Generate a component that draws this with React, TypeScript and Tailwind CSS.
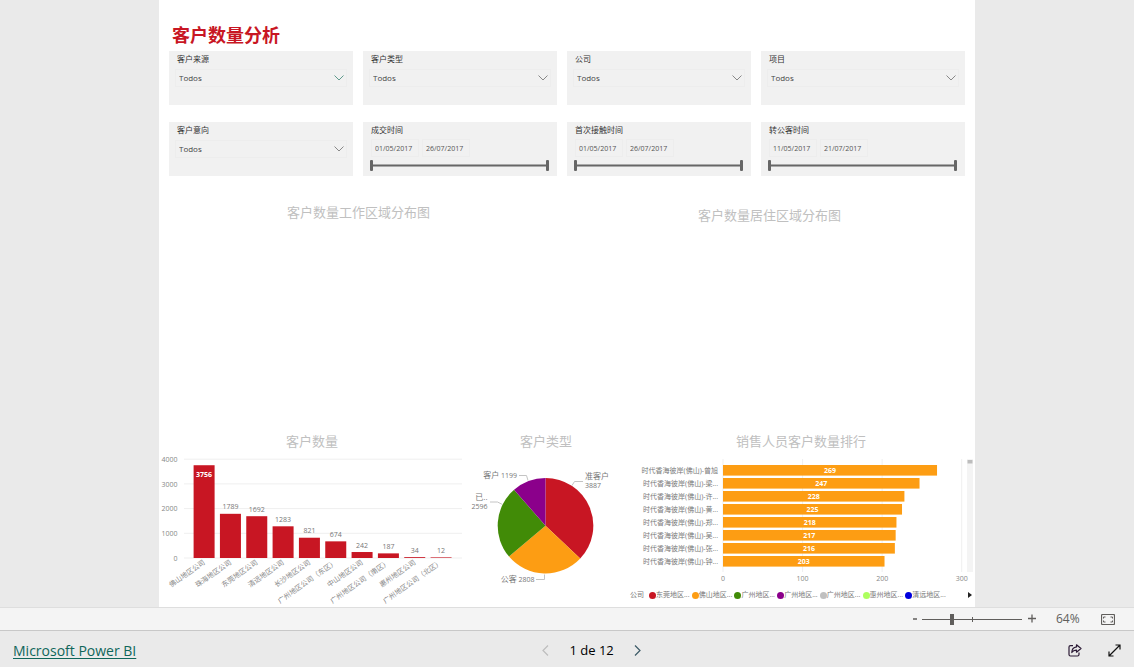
import React from "react";
import clsx from "clsx";

const slicers = [
  { id: "source", label: "客户来源", active: true },
  { id: "type", label: "客户类型" },
  { id: "company", label: "公司" },
  { id: "project", label: "项目" },
  { id: "intent", label: "客户意向" },
  { id: "deal", label: "成交时间", range: ["01/05/2017", "26/07/2017"] },
  { id: "contact", label: "首次接触时间", range: ["01/05/2017", "26/07/2017"] },
  { id: "transfer", label: "转公客时间", range: ["11/05/2017", "21/07/2017"] },
];

const regions = [
  { name: "佛山地区公司", value: 3756 },
  { name: "珠海地区公司", value: 1789 },
  { name: "东莞地区公司", value: 1692 },
  { name: "清远地区公司", value: 1283 },
  { name: "长沙地区公司", value: 821 },
  { name: "广州地区公司（东区）", value: 674 },
  { name: "中山地区公司", value: 242 },
  { name: "广州地区公司（南区）", value: 187 },
  { name: "惠州地区公司", value: 34 },
  { name: "广州地区公司（北区）", value: 12 },
];

const types = [
  { value: 3887, color: "#c81623" },
  { value: 2808, color: "#fd9d13" },
  { value: 2596, color: "#418b07" },
  { value: 1199, color: "#8b008b" },
];

const sellers = [
  { name: "时代香海彼岸(佛山)-曾旭", value: 269 },
  { name: "时代香海彼岸(佛山)-梁...", value: 247 },
  { name: "时代香海彼岸(佛山)-许...", value: 228 },
  { name: "时代香海彼岸(佛山)-黄...", value: 225 },
  { name: "时代香海彼岸(佛山)-郑...", value: 218 },
  { name: "时代香海彼岸(佛山)-吴...", value: 217 },
  { name: "时代香海彼岸(佛山)-张...", value: 216 },
  { name: "时代香海彼岸(佛山)-钟...", value: 203 },
];

const legend = [
  { name: "东莞地区...", dot: "bg-[#c81623]" },
  { name: "佛山地区...", dot: "bg-[#fd9d13]" },
  { name: "广州地区...", dot: "bg-[#418b07]" },
  { name: "广州地区...", dot: "bg-[#8b008b]" },
  { name: "广州地区...", dot: "bg-[#c0c0c0]" },
  { name: "惠州地区...", dot: "bg-[#adff5f]" },
  { name: "清远地区...", dot: "bg-[#0000dd]" },
];

const Dropdown = ({ id, active }: { id: string; active?: boolean }) => (
  <div className="relative mx-[6px] mt-[2px]">
    <select
      id={id}
      className="block h-[18px] w-full appearance-none border border-[#ededed] bg-transparent px-[3px] text-[8px] text-[#444] outline-none"
    >
      <option>Todos</option>
    </select>
    <svg
      viewBox="0 0 10 6"
      className={clsx(
        "pointer-events-none absolute right-[3px] top-[6px] h-[6px] w-[10px]",
        active ? "text-[#5f9a8c]" : "text-[#888]"
      )}
      fill="none"
      stroke="currentColor"
    >
      <path d="M.5 .5 5 5 9.500 .5" />
    </svg>
  </div>
);

const rangeClass =
  "pointer-events-none absolute inset-0 h-[11px] w-full appearance-none bg-transparent [&::-webkit-slider-thumb]:pointer-events-auto [&::-webkit-slider-thumb]:h-[11px] [&::-webkit-slider-thumb]:w-[3px] [&::-webkit-slider-thumb]:appearance-none [&::-webkit-slider-thumb]:rounded-[1px] [&::-webkit-slider-thumb]:bg-[#666]";

const DateRange = ({
  id,
  label,
  range,
}: {
  id: string;
  label: string;
  range: string[];
}) => (
  <>
    <div className="flex gap-[3px] px-[8px] pt-px">
      {range.map((date, i) => (
        <input
          key={date}
          id={i === 0 ? id : `${id}-end`}
          aria-label={i === 0 ? undefined : label}
          type="text"
          defaultValue={date}
          className="h-[18px] w-[48px] border border-[#ededed] bg-transparent px-[3px] text-[7px] text-[#555] outline-none"
        />
      ))}
    </div>
    <div className="relative ml-[7px] mr-[8px] mt-[3px] h-[11px]">
      <div className="absolute inset-x-0 top-[4px] h-[3px] border-y border-[#aaa] bg-[#666]" />
      <input
        type="range"
        aria-label={label}
        defaultValue={0}
        className={rangeClass}
      />
      <input
        type="range"
        aria-label={label}
        defaultValue={100}
        className={rangeClass}
      />
    </div>
  </>
);

const VisualTitle = ({ children }: { children: React.ReactNode }) => (
  <h2 className="text-center text-[13px] leading-[18px] text-[#c0c0c0]">
    {children}
  </h2>
);

const ColumnChart = () => {
  const base = 108;
  return (
    <svg viewBox="0 0 306 157" className="w-full text-[7px]" fill="#888">
      {[4000, 3000, 2000, 1000, 0].map((tick) => {
        const y = base - (tick / 4000) * 98.8;
        return (
          <g key={tick}>
            <line x1="25" x2="303" y1={y} y2={y} stroke="#efefef" />
            <text x="18.500" y={y + 2.6} textAnchor="end">
              {tick}
            </text>
          </g>
        );
      })}
      {regions.map((region, i) => {
        const x = 34.6 + i * 26.33;
        const height = Math.max((region.value / 4000) * 98.8, 0.6);
        const inside = i === 0;
        return (
          <g key={region.name}>
            <rect x={x} y={base - height} width="21" height={height} fill="#c81623" />
            <text
              x={x + 10.5}
              y={base - height + (inside ? 12 : -4.5)}
              textAnchor="middle"
              fill={inside ? "#fff" : "#777"}
              fontWeight={inside ? 700 : 400}
            >
              {region.value}
            </text>
            <text
              textAnchor="end"
              transform={`translate(${x + 12} 113.500) rotate(-35)`}
            >
              {region.name}
            </text>
          </g>
        );
      })}
    </svg>
  );
};

const PieChart = () => {
  const cx = 80.5;
  const cy = 75.7;
  const r = 47.8;
  const total = types.reduce((sum, t) => sum + t.value, 0);
  let angle = 0;
  const slices = types.map((t) => {
    const start = angle;
    angle += (t.value / total) * Math.PI * 2;
    const x1 = cx + r * Math.sin(start);
    const y1 = cy - r * Math.cos(start);
    const x2 = cx + r * Math.sin(angle);
    const y2 = cy - r * Math.cos(angle);
    return { ...t, d: `M${cx} ${cy}L${x1} ${y1}A${r} ${r} 0 0 1 ${x2} ${y2}Z` };
  });
  return (
    <svg viewBox="0 0 162 157" className="w-full text-[7px]" fill="#777">
      {slices.map((s) => (
        <path key={s.value} d={s.d} fill={s.color} />
      ))}
      <g fill="none" stroke="#c4c4c4">
        <path d="M107 35.500 109.500 31.500H118" />
        <path d="M54 25.500H61.500L63 30.500" />
        <path d="M25 52H32.500L37.500 54.500" />
        <path d="M71 129.500H79.500V124.500" />
      </g>
      <text x="120" y="29" className="text-[8px]">
        准客户
      </text>
      <text x="120" y="38">
        3887
      </text>
      <text x="52" y="28" textAnchor="end">
        <tspan className="text-[8px]">客户</tspan> 1199
      </text>
      <text x="22.500" y="50" textAnchor="end" className="text-[8px]">
        已..
      </text>
      <text x="22.500" y="59" textAnchor="end">
        2596
      </text>
      <text x="69.500" y="132" textAnchor="end">
        <tspan className="text-[8px]">公客</tspan> 2808
      </text>
    </svg>
  );
};

const RankingChart = () => {
  const scale = 238.7 / 300;
  return (
    <svg viewBox="0 0 348 139" className="w-full text-[7px]" fill="#888">
      {[0, 100, 200, 300].map((tick) => {
        const x = 96 + tick * scale;
        return (
          <g key={tick}>
            <line x1={x} x2={x} y1="9" y2="122" stroke="#efefef" />
            <text x={x} y="131" textAnchor="middle">
              {tick}
            </text>
          </g>
        );
      })}
      {sellers.map((seller, i) => {
        const y = 15 + i * 13;
        const width = seller.value * scale;
        return (
          <g key={seller.name}>
            <rect x="96" y={y} width={width} height="10.6" fill="#fd9d13" />
            <text x="91" y={y + 8} textAnchor="end" fill="#777">
              {seller.name}
            </text>
            <text
              x={96 + width / 2}
              y={y + 8}
              textAnchor="middle"
              fill="#fff"
              fontWeight="700"
            >
              {seller.value}
            </text>
          </g>
        );
      })}
      <rect x="340" y="9" width="6" height="113" fill="#f4f4f4" />
      <rect x="340.500" y="10" width="5" height="3.500" fill="#bdbdbd" />
    </svg>
  );
};

const Legend = () => (
  <div className="flex items-center pl-[3px] pr-[3px] text-[7px] leading-[12px] text-[#777]">
    <span className="w-[19px] shrink-0">公司</span>
    <ul className="grid w-[299px] grid-cols-7">
      {legend.map((item, i) => (
        <li key={i} className="flex items-center whitespace-nowrap">
          <span className={clsx("size-[7px] shrink-0 rounded-full", item.dot)} />
          {item.name}
        </li>
      ))}
    </ul>
    <button type="button" aria-label="Next" className="ml-auto">
      <svg viewBox="0 0 4 6" className="h-[6px] w-[4px]" fill="#222">
        <path d="M0 0 4 3 0 6Z" />
      </svg>
    </button>
  </div>
);

const ZoomBar = () => (
  <div className="flex h-[24px] shrink-0 items-center justify-end border-b border-t border-b-[#c8c8c8] border-t-[#dedede] bg-[#f4f4f4] pr-[19px] text-[12px] text-[#605e5c]">
    <button type="button" aria-label="Zoom out" className="w-[10px]">
      <svg viewBox="0 0 10 10" className="size-[10px]" stroke="currentColor" strokeWidth="1.500">
        <path d="M3 5H7" />
      </svg>
    </button>
    <div className="relative ml-[2px] h-[11px] w-[100px]">
      <div className="absolute inset-x-0 top-[5px] h-px bg-[#605e5c]" />
      <div className="absolute left-1/2 top-[3px] h-[5px] w-px bg-[#605e5c]" />
      <input
        type="range"
        aria-label="Zoom"
        defaultValue={29}
        className="absolute inset-0 h-[11px] w-full appearance-none bg-transparent [&::-webkit-slider-thumb]:h-[11px] [&::-webkit-slider-thumb]:w-[4px] [&::-webkit-slider-thumb]:appearance-none [&::-webkit-slider-thumb]:bg-[#605e5c]"
      />
    </div>
    <button type="button" aria-label="Zoom in" className="ml-[5px]">
      <svg viewBox="0 0 10 10" className="size-[10px]" stroke="currentColor" strokeWidth="1.300">
        <path d="M1 4.500H9M5 .5V8.500" />
      </svg>
    </button>
    <span className="ml-[19px] w-[45px]">64%</span>
    <button type="button" aria-label="Fit to page">
      <svg viewBox="0 0 14 11" className="h-[11px] w-[14px]" fill="none" stroke="currentColor">
        <rect x=".5" y=".5" width="13" height="10" rx="1" strokeWidth="1.200" />
        <path d="M4.500 3H2.500V4.500M9.500 3H11.500V4.500M4.500 8H2.500V6.500M9.500 8H11.500V6.500" />
      </svg>
    </button>
  </div>
);

const Footer = () => (
  <footer className="flex h-[36px] shrink-0 items-center bg-[#eaeaea] px-[13px] pt-[3px]">
    <a href="#" className="text-[14px] text-[#0f665a] underline underline-offset-2">
      Microsoft Power BI
    </a>
    <nav className="flex flex-1 items-center justify-center gap-[20px]">
      <button type="button" aria-label="Previous page" disabled>
        <svg viewBox="0 0 7 11" className="h-[11px] w-[7px]" fill="none" stroke="#bdbdbd" strokeWidth="1.200">
          <path d="M6 .5 1 5.500 6 10.500" />
        </svg>
      </button>
      <span className="text-[13px] font-medium text-black">1 de 12</span>
      <button type="button" aria-label="Next page">
        <svg viewBox="0 0 7 11" className="h-[11px] w-[7px]" fill="none" stroke="#3c5a66" strokeWidth="1.200">
          <path d="M1 .5 6 5.500 1 10.500" />
        </svg>
      </button>
    </nav>
    <div className="flex w-[74px] justify-end gap-[26px]">
      <button type="button" aria-label="Share">
        <svg viewBox="0 0 14 13" className="h-[13px] w-[14px]" fill="none" stroke="#2b1a35" strokeWidth="1.200" strokeLinejoin="round">
          <path d="M5 1.600H2.500Q1 1.600 1 3.100V10.500Q1 12 2.500 12H9.500Q11 12 11 10.500V8.500" />
          <path d="M8.500 .8 13 4.500 8.500 8.200V6.200Q5.500 6 3.800 8.500 4 3.500 8.500 2.900Z" />
        </svg>
      </button>
      <button type="button" aria-label="Full screen">
        <svg viewBox="0 0 13 13" className="size-[13px]" fill="none" stroke="#111" strokeWidth="1.200">
          <path d="M1 12 12 1M7.500 1H12V5.500M1 7.500V12H5.500" />
        </svg>
      </button>
    </div>
  </footer>
);

export default function App() {
  return (
    <div className="flex min-h-screen flex-col bg-[#eaeaea] font-['Open_Sans','Noto_Sans_CJK_SC',sans-serif]">
      <main className="mx-auto w-full max-w-[816px] flex-1 bg-white">
        <h1 className="px-[13px] pb-[2px] pt-[21px] text-[18px] font-bold leading-[28px] text-[#c81623]">
          客户数量分析
        </h1>
        <section className="grid grid-cols-[184fr_194fr_184fr_204fr] gap-x-[10px] gap-y-[17px] px-[10px]">
          {slicers.map((s) => (
            <div key={s.id} className="h-[54px] bg-[#f1f1f1]">
              <label
                htmlFor={s.id}
                className="block px-[8px] text-[8px] leading-[16px] text-[#333]"
              >
                {s.label}
              </label>
              {s.range ? (
                <DateRange id={s.id} label={s.label} range={s.range} />
              ) : (
                <Dropdown id={s.id} active={s.active} />
              )}
            </div>
          ))}
        </section>
        <section className="grid h-[228px] grid-cols-[399fr_411fr] gap-[6px] pt-[27px]">
          <VisualTitle>客户数量工作区域分布图</VisualTitle>
          <div className="pt-[3px]">
            <VisualTitle>客户数量居住区域分布图</VisualTitle>
          </div>
        </section>
        <section className="grid grid-cols-[306fr_162fr_348fr] pt-[28px]">
          <div>
            <VisualTitle>客户数量</VisualTitle>
            <ColumnChart />
          </div>
          <div>
            <VisualTitle>客户类型</VisualTitle>
            <PieChart />
          </div>
          <div>
            <VisualTitle>销售人员客户数量排行</VisualTitle>
            <RankingChart />
            <Legend />
          </div>
        </section>
      </main>
      <ZoomBar />
      <Footer />
    </div>
  );
}
